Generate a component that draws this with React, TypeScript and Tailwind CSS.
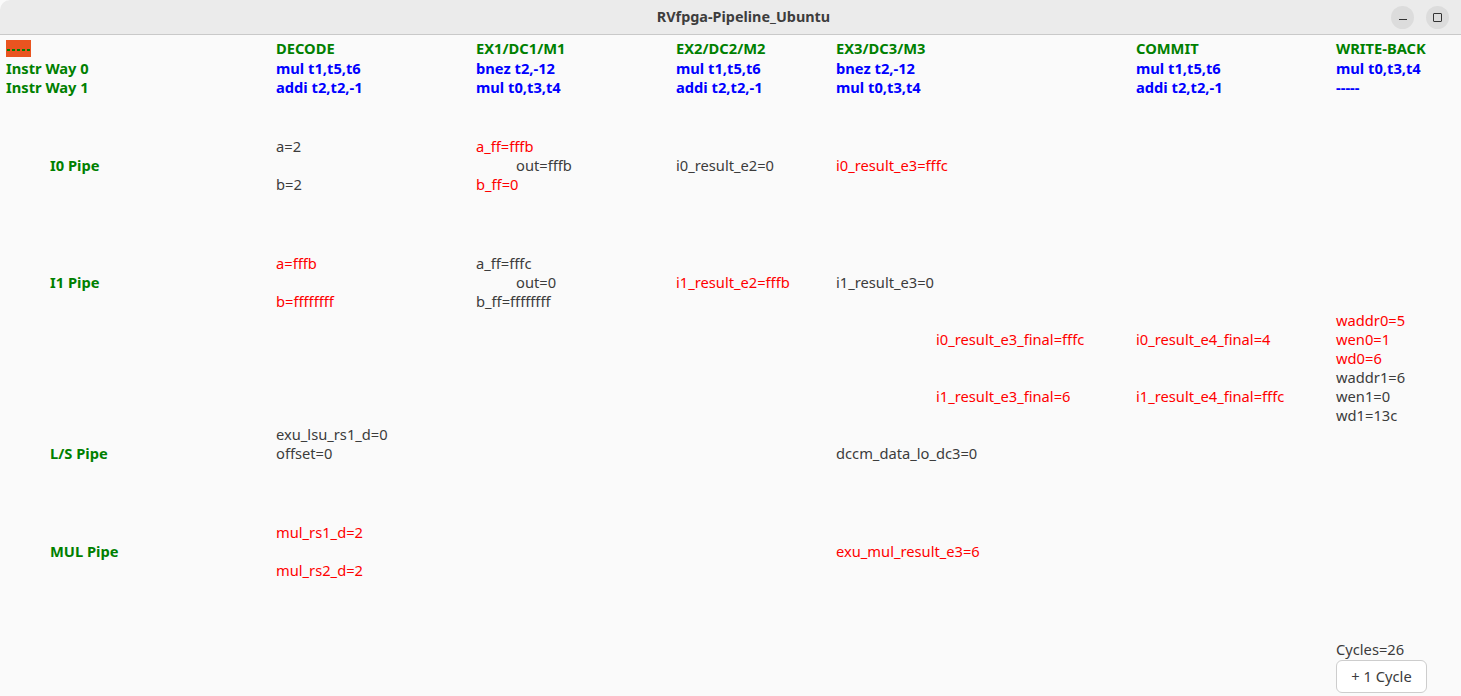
import React from 'react'

const font = { fontFamily: '"Noto Sans", "Open Sans", sans-serif' }

// column starts: 6, 50, 276, 476, 676, 836, 936, 1136, 1336
const cols = 'grid grid-cols-[44px_226px_200px_200px_160px_100px_200px_200px_1fr] pl-[6px]'

const G = 'text-[#008000] font-bold'
const B = 'text-[#0000ff] font-bold'
const R = 'text-[#ff0000]'
const D = 'text-[#3c3c3c]'

export default function App() {
  return (
    <div className="w-[1461px] h-[696px] overflow-hidden bg-[#fafafa] text-[14.7px]" style={font}>
      {/* title bar */}
      <div className="h-[35px] bg-[#ebebeb] border-b border-[#c9c9c9] rounded-tl-[10px] flex items-center">
        <div className="flex-1 text-center font-bold text-[14.4px] text-[#3d3d3d] pl-[96px]">RVfpga-Pipeline_Ubuntu</div>
        <div className="flex items-center gap-[12px] pr-[12px]">
          <div className="w-[23px] h-[23px] rounded-full bg-[#dcdcdc] flex items-center justify-center">
            <div className="w-[8px] h-[1.5px] bg-[#333] mt-[5px]" />
          </div>
          <div className="w-[23px] h-[23px] rounded-full bg-[#dcdcdc] flex items-center justify-center">
            <div className="w-[9px] h-[9px] border-[1.5px] border-[#333] rounded-[1px]" />
          </div>
        </div>
      </div>

      {/* header */}
      <div className={`${cols} grid-rows-[20px_20px_19px] leading-[20px] mt-[3px]`}>
        <div className="col-start-1 row-start-1 col-span-2 pt-[2px]">
          <div className="w-[25px] h-[17px] bg-[#e95420] flex items-center justify-center gap-[2px] pt-[3px]">
            <div className="w-[3px] h-[2px] bg-[#008000]" />
            <div className="w-[3px] h-[2px] bg-[#008000]" />
            <div className="w-[3px] h-[2px] bg-[#008000]" />
            <div className="w-[3px] h-[2px] bg-[#008000]" />
            <div className="w-[3px] h-[2px] bg-[#008000]" />
          </div>
        </div>
        <div className={`col-start-3 row-start-1 ${G}`}>DECODE</div>
        <div className={`col-start-4 row-start-1 ${G}`}>EX1/DC1/M1</div>
        <div className={`col-start-5 row-start-1 ${G}`}>EX2/DC2/M2</div>
        <div className={`col-start-6 col-span-2 row-start-1 ${G}`}>EX3/DC3/M3</div>
        <div className={`col-start-8 row-start-1 ${G}`}>COMMIT</div>
        <div className={`col-start-9 row-start-1 ${G}`}>WRITE-BACK</div>

        <div className={`col-start-1 col-span-2 row-start-2 ${G}`}>Instr Way 0</div>
        <div className={`col-start-3 row-start-2 ${B}`}>mul t1,t5,t6</div>
        <div className={`col-start-4 row-start-2 ${B}`}>bnez t2,-12</div>
        <div className={`col-start-5 row-start-2 ${B}`}>mul t1,t5,t6</div>
        <div className={`col-start-6 col-span-2 row-start-2 ${B}`}>bnez t2,-12</div>
        <div className={`col-start-8 row-start-2 ${B}`}>mul t1,t5,t6</div>
        <div className={`col-start-9 row-start-2 ${B}`}>mul t0,t3,t4</div>

        <div className={`col-start-1 col-span-2 row-start-3 leading-[19px] ${G}`}>Instr Way 1</div>
        <div className={`col-start-3 row-start-3 leading-[19px] ${B}`}>addi t2,t2,-1</div>
        <div className={`col-start-4 row-start-3 leading-[19px] ${B}`}>mul t0,t3,t4</div>
        <div className={`col-start-5 row-start-3 leading-[19px] ${B}`}>addi t2,t2,-1</div>
        <div className={`col-start-6 col-span-2 row-start-3 leading-[19px] ${B}`}>mul t0,t3,t4</div>
        <div className={`col-start-8 row-start-3 leading-[19px] ${B}`}>addi t2,t2,-1</div>
        <div className={`col-start-9 row-start-3 leading-[19px] ${B}`}>-----</div>
      </div>

      {/* I0 pipe */}
      <div className={`${cols} grid-rows-[19px_19px_19px] leading-[19px] mt-[40px]`}>
        <div className={`col-start-2 row-start-2 ${G}`}>I0 Pipe</div>
        <div className={`col-start-3 row-start-1 ${D}`}>a=2</div>
        <div className={`col-start-3 row-start-3 ${D}`}>b=2</div>
        <div className={`col-start-4 row-start-1 ${R}`}>a_ff=fffb</div>
        <div className={`col-start-4 row-start-2 pl-[40px] ${D}`}>out=fffb</div>
        <div className={`col-start-4 row-start-3 ${R}`}>b_ff=0</div>
        <div className={`col-start-5 row-start-2 ${D}`}>i0_result_e2=0</div>
        <div className={`col-start-6 col-span-2 row-start-2 ${R}`}>i0_result_e3=fffc</div>
      </div>

      {/* I1 pipe */}
      <div className={`${cols} grid-rows-[19px_19px_19px] leading-[19px] mt-[60px]`}>
        <div className={`col-start-2 row-start-2 ${G}`}>I1 Pipe</div>
        <div className={`col-start-3 row-start-1 ${R}`}>a=fffb</div>
        <div className={`col-start-3 row-start-3 ${R}`}>b=ffffffff</div>
        <div className={`col-start-4 row-start-1 ${D}`}>a_ff=fffc</div>
        <div className={`col-start-4 row-start-2 pl-[40px] ${D}`}>out=0</div>
        <div className={`col-start-4 row-start-3 ${D}`}>b_ff=ffffffff</div>
        <div className={`col-start-5 row-start-2 ${R}`}>i1_result_e2=fffb</div>
        <div className={`col-start-6 col-span-2 row-start-2 ${D}`}>i1_result_e3=0</div>
      </div>

      {/* final results / write-back */}
      <div className={`${cols} grid-rows-[19px_19px_19px_19px_19px_19px] leading-[19px]`}>
        <div className={`col-start-7 row-start-2 ${R}`}>i0_result_e3_final=fffc</div>
        <div className={`col-start-8 row-start-2 ${R}`}>i0_result_e4_final=4</div>
        <div className={`col-start-7 row-start-5 ${R}`}>i1_result_e3_final=6</div>
        <div className={`col-start-8 row-start-5 ${R}`}>i1_result_e4_final=fffc</div>
        <div className={`col-start-9 row-start-1 ${R}`}>waddr0=5</div>
        <div className={`col-start-9 row-start-2 ${R}`}>wen0=1</div>
        <div className={`col-start-9 row-start-3 ${R}`}>wd0=6</div>
        <div className={`col-start-9 row-start-4 ${D}`}>waddr1=6</div>
        <div className={`col-start-9 row-start-5 ${D}`}>wen1=0</div>
        <div className={`col-start-9 row-start-6 ${D}`}>wd1=13c</div>
      </div>

      {/* L/S pipe */}
      <div className={`${cols} grid-rows-[19px_19px] leading-[19px]`}>
        <div className={`col-start-2 row-start-2 ${G}`}>L/S Pipe</div>
        <div className={`col-start-3 row-start-1 ${D}`}>exu_lsu_rs1_d=0</div>
        <div className={`col-start-3 row-start-2 ${D}`}>offset=0</div>
        <div className={`col-start-6 col-span-2 row-start-2 ${D}`}>dccm_data_lo_dc3=0</div>
      </div>

      {/* MUL pipe */}
      <div className={`${cols} grid-rows-[19px_19px_19px] leading-[19px] mt-[60px]`}>
        <div className={`col-start-2 row-start-2 ${G}`}>MUL Pipe</div>
        <div className={`col-start-3 row-start-1 ${R}`}>mul_rs1_d=2</div>
        <div className={`col-start-3 row-start-3 ${R}`}>mul_rs2_d=2</div>
        <div className={`col-start-6 col-span-2 row-start-2 ${R}`}>exu_mul_result_e3=6</div>
      </div>

      {/* cycles */}
      <div className={`${cols} leading-[19px] mt-[60px]`}>
        <div className="col-start-9 flex flex-col items-start">
          <div className={D}>Cycles=26</div>
          <button className="mt-[1px] w-[91px] h-[33px] bg-white border border-[#cdcdcd] rounded-[6px] text-[#3c3c3c] text-[14.7px]">
            + 1 Cycle
          </button>
        </div>
      </div>
    </div>
  )
}
